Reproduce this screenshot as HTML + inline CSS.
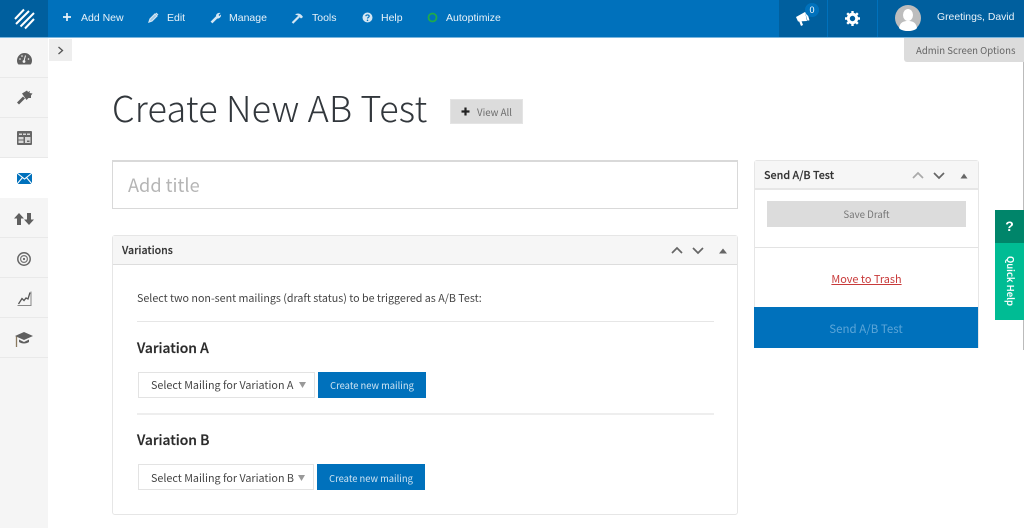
<!DOCTYPE html>
<html lang="en"><head><meta charset="utf-8"><title>Create New AB Test</title>
<style>
html,body{margin:0;padding:0;width:1024px;height:528px;overflow:hidden;background:#fff}
body{position:relative;font-family:"Noto Sans CJK JP","Liberation Sans",sans-serif;color:#3a3a3a}
.a{position:absolute;white-space:nowrap}
.b{position:absolute;box-sizing:border-box}
.nav{position:absolute;top:9px;font:10.5px/18px "Liberation Sans",sans-serif;color:#e8f2f9;white-space:nowrap}
svg{position:absolute;overflow:visible}
.side{position:absolute;left:0;width:48px;height:40px;border-bottom:1px solid #e9e9e9;box-sizing:border-box}
</style></head><body>
<div class="b" style="left:0;top:0;width:1024px;height:37px;background:#0071bc"></div>
<div class="b" style="left:0;top:37px;width:1024px;height:1px;background:#7ab6de"></div>
<div class="b" style="left:0;top:0;width:48px;height:37px;background:#005f9e"></div>
<div class="b" style="left:779px;top:0;width:245px;height:37px;background:#005f9e"></div>
<div class="b" style="left:827px;top:0;width:1px;height:37px;background:#0071bc"></div>
<div class="b" style="left:877px;top:0;width:1px;height:37px;background:#0071bc"></div>
<svg style="left:14px;top:8px" width="22" height="22" viewBox="0 0 22 22"><g stroke="#fff" stroke-width="2"><path d="M1 11 10 1.500M2 16 15 3M6.500 18.500 20 5M11 20.500 20 11"/></g></svg>

<svg style="left:62px;top:12px" width="10" height="10"><path d="M5 1v8M1 5h8" stroke="#e8f2f9" stroke-width="1.700"/></svg>
<div class="nav" style="left:81px">Add New</div>
<svg style="left:148px;top:12px" width="11" height="11"><path d="M1 10 2 7 7 2 9 4 4 9ZM8 1 10 3" fill="#9cc6e4" stroke="#d4e6f3" stroke-width="1.200"/></svg>
<div class="nav" style="left:167px">Edit</div>
<svg style="left:210px;top:12px" width="12" height="12"><path d="M1.500 10.500 7 5" stroke="#d4e6f3" stroke-width="2.600"/><path d="M6 4C6 2 8 .5 10.500 1L8.500 3 9.500 4 11 2.500C11.500 5 9 7 7 6.500Z" fill="#d4e6f3"/></svg>
<div class="nav" style="left:229px">Manage</div>
<svg style="left:291px;top:12px" width="13" height="13"><path d="M1.500 11 8 4.500" stroke="#d4e6f3" stroke-width="2.200"/><path d="M4 2.500C7 .5 10 1.500 12 5L10 6.500 7 3.500Z" fill="#d4e6f3"/></svg>
<div class="nav" style="left:312px">Tools</div>
<svg style="left:362px;top:12px" width="11" height="11"><circle cx="5.500" cy="5.500" r="5" fill="#d4e6f3"/><path d="M3.800 4.200C4 2.500 7.200 2.500 7.200 4.300 7.200 5.400 5.500 5.400 5.500 6.500" fill="none" stroke="#0071bc" stroke-width="1.200"/><circle cx="5.500" cy="8.300" r=".8" fill="#0071bc"/></svg>
<div class="nav" style="left:381px">Help</div>
<svg style="left:427px;top:12px" width="11" height="11"><circle cx="5.500" cy="5.500" r="4" fill="none" stroke="#1faa4c" stroke-width="1.800"/></svg>
<div class="nav" style="left:446px">Autoptimize</div>

<svg style="left:795px;top:9px" width="18" height="17"><path d="M1 8 10 3 12 12 3 12.500Z" fill="#fff"/><path d="M4 12 6 17 8 16 6.500 12Z" fill="#fff"/><path d="M11 3 13.500 11.500" stroke="#fff" stroke-width="2"/></svg>
<div class="b" style="left:805px;top:3px;width:14px;height:14px;border-radius:7px;background:#0071bc;color:#fff;font:9px/14px 'Liberation Sans',sans-serif;text-align:center">0</div>
<svg style="left:845px;top:11px" width="15" height="15" viewBox="0 0 15 15"><circle cx="7.500" cy="7.500" r="4.200" fill="none" stroke="#fff" stroke-width="3"/><g stroke="#fff" stroke-width="2.400"><path d="M7.500 0v2.500M7.500 12.500V15M0 7.500h2.500M12.500 7.500H15M2.200 2.200 4 4M11 11l1.800 1.800M2.200 12.800 4 11M11 4l1.800-1.800"/></g></svg>
<svg style="left:895px;top:5px" width="26" height="26" viewBox="0 0 26 26"><circle cx="13" cy="13" r="13" fill="#bdbdbd"/><ellipse cx="13" cy="10" rx="5" ry="6" fill="#fff"/><path d="M4 23C5 17 9 16 13 16S21 17 22 23C19 27 7 27 4 23Z" fill="#fff"/></svg>
<div class="nav" style="left:937px;color:#e8f2f9;font-size:10.4px">Greetings, David</div>

<div class="b" style="left:904px;top:38px;width:120px;height:24px;background:#dcdcdc;border-radius:0 0 0 3px"></div>
<div class="a" style="left:916px;top:42px;font-size:9.6px;line-height:16px;color:#666">Admin Screen Options</div>

<div class="b" style="left:0;top:38px;width:48px;height:490px;background:#f5f5f5"></div>
<div class="side" style="top:38px"></div><div class="side" style="top:78px"></div><div class="side" style="top:118px"></div>
<div class="side" style="top:158px;background:#fff;border:0"></div>
<div class="side" style="top:198px"></div><div class="side" style="top:238px"></div><div class="side" style="top:278px"></div><div class="side" style="top:318px"></div>
<div class="b" style="left:49px;top:39px;width:23px;height:22px;background:#eee"></div>
<svg style="left:57px;top:46px" width="7" height="9"><path d="M1.500 1 5.500 4.500 1.500 8" fill="none" stroke="#555" stroke-width="1.300"/></svg>

<svg style="left:17px;top:52px" width="15" height="13" viewBox="0 0 15 13"><path d="M0 8.500a7.500 7.500 0 0 1 15 0c0 2-.6 3.300-1.500 4H1.500C.6 11.800 0 10.500 0 8.500Z" fill="#5f5f5f"/><path d="M8.500 3.500 7 9" stroke="#f5f5f5" stroke-width="1"/><circle cx="7" cy="9.500" r="1.400" fill="#f5f5f5"/><circle cx="3" cy="7" r=".8" fill="#f5f5f5"/><circle cx="5" cy="4" r=".8" fill="#f5f5f5"/><circle cx="11.500" cy="7" r=".8" fill="#f5f5f5"/></svg>
<svg style="left:16px;top:90px" width="17" height="16" viewBox="0 0 17 16"><path d="M6 3.500 11 .5 12 2 14 1 13.500 3 16.500 3.500 15 5.500 15 8 12.500 8 10.500 10Z" fill="#5f5f5f"/><path d="M8 7.500 2 13.500" stroke="#5f5f5f" stroke-width="2.800"/></svg>
<svg style="left:17px;top:131px" width="15" height="14" viewBox="0 0 15 14"><rect width="15" height="14" rx="1" fill="#666"/><path d="M2 2.500h3V4H2zM6 2.500h3V4H6zM10 2.500h3V4h-3zM1.500 6h5v2.500h-5zM1.500 9.500h5V12h-5zM8 6h5.500v6H8z" fill="#d8d8d8"/><path d="M10 9.500h2.500V11H10z" fill="#666"/></svg>
<svg style="left:17px;top:173px" width="15" height="11" viewBox="0 0 15 11"><rect width="15" height="11" fill="#0071bc"/><path d="M0 0 7.500 6 15 0M0 11 5.500 4.500M15 11 9.500 4.500" fill="none" stroke="#fff" stroke-width="1.100"/></svg>
<svg style="left:14px;top:213px" width="20" height="12" viewBox="0 0 20 12"><path d="M5 0 10 5.500H7V12H3V5.500H0ZM15 12 10 6.500H13V0H17V6.500H20Z" fill="#5f5f5f"/></svg>
<svg style="left:17px;top:252px" width="14" height="14" viewBox="0 0 14 14"><circle cx="7" cy="7" r="6.200" fill="none" stroke="#666" stroke-width="1.500"/><circle cx="7" cy="7" r="3.400" fill="none" stroke="#777" stroke-width="1.200"/><circle cx="7" cy="7" r="1.100" fill="#666"/></svg>
<svg style="left:17px;top:291px" width="15" height="15" viewBox="0 0 15 15"><path d="M.5 14.500h13.500V.5" fill="none" stroke="#888" stroke-width="1"/><path d="M1.500 13 5 7.500 7 9.500 9 7 11 8 13 1.500" fill="none" stroke="#555" stroke-width="1.300"/></svg>
<svg style="left:15px;top:332px" width="18" height="15" viewBox="0 0 18 15"><path d="M0 4 9 0 18 4 9 8Z" fill="#5f5f5f"/><path d="M4 7.500V10C7 12 11 12 14 10V7.500L9 10Z" fill="#5f5f5f"/><path d="M1.500 4.500V15" stroke="#8a7a60" stroke-width="1.300"/></svg>

<div class="a" style="left:112px;top:82px;font-size:36px;line-height:50px;font-weight:300;color:#32373c;letter-spacing:.2px">Create New AB Test</div>
<div class="b" style="left:450px;top:99px;width:73px;height:25px;background:#dcdcdc;border:1px solid #e4e4e4"></div>
<svg style="left:461px;top:107px" width="9" height="9"><path d="M4.500 .5v8M.5 4.500h8" stroke="#222" stroke-width="2.200"/></svg>
<div class="a" style="left:477px;top:104px;font-size:9.7px;line-height:16px;color:#6c6c6c">View All</div>

<div class="b" style="left:112px;top:160px;width:626px;height:49px;border:1px solid #d9d9d9;border-width:2px 1px 1px 1px"></div>
<div class="a" style="left:128px;top:171px;font-size:18.2px;line-height:28px;color:#b5b5b5">Add title</div>

<div class="b" style="left:112px;top:235px;width:626px;height:280px;border:1px solid #e6e6e6;border-radius:3px"></div>
<div class="b" style="left:113px;top:236px;width:624px;height:29px;background:#f6f6f6;border-bottom:1px solid #ddd"></div>
<div class="a" style="left:122px;top:242px;font-size:10.6px;line-height:17px;color:#333;font-weight:500;-webkit-text-stroke:.15px #333">Variations</div>
<svg style="left:671px;top:245px" width="60" height="10"><path d="M1 8 6 3 11 8M22 3 27 8 32 3" fill="none" stroke="#666" stroke-width="1.700"/><path d="M48 8.500 52 3.500 56 8.500Z" fill="#666"/></svg>
<div class="a" style="left:137px;top:290px;font-size:10.7px;line-height:17px;color:#444">Select two non-sent mailings (draft status) to be triggered as A/B Test:</div>
<div class="b" style="left:137px;top:321px;width:577px;height:1px;background:#e6e6e6"></div>
<div class="a" style="left:137px;top:337px;font-size:13.9px;line-height:22px;font-weight:500;color:#2b2b2b;-webkit-text-stroke:.25px #2b2b2b">Variation A</div>
<div class="b" style="left:138px;top:372px;width:177px;height:26px;border:1px solid #e3e3e3"></div>
<div class="a" style="left:151px;top:377px;font-size:10.75px;line-height:17px;color:#444">Select Mailing for Variation A</div>
<svg style="left:299px;top:382px" width="8" height="7"><path d="M0 0h7L3.500 6Z" fill="#999"/></svg>
<div class="b" style="left:318px;top:372px;width:108px;height:26px;background:#0071bc"></div>
<div class="a" style="left:318px;top:377px;width:108px;text-align:center;font-size:9.4px;line-height:17px;color:#cfe4f3">Create new mailing</div>

<div class="b" style="left:137px;top:413px;width:577px;height:2px;background:#eee"></div>
<div class="a" style="left:137px;top:429px;font-size:13.9px;line-height:22px;font-weight:500;color:#2b2b2b;-webkit-text-stroke:.25px #2b2b2b">Variation B</div>
<div class="b" style="left:138px;top:464px;width:176px;height:26px;border:1px solid #e3e3e3"></div>
<div class="a" style="left:151px;top:470px;font-size:10.75px;line-height:17px;color:#444">Select Mailing for Variation B</div>
<svg style="left:298px;top:475px" width="8" height="7"><path d="M0 0h7L3.500 6Z" fill="#999"/></svg>
<div class="b" style="left:317px;top:464px;width:108px;height:26px;background:#0071bc"></div>
<div class="a" style="left:317px;top:470px;width:108px;text-align:center;font-size:9.4px;line-height:17px;color:#cfe4f3">Create new mailing</div>

<div class="b" style="left:754px;top:160px;width:225px;height:188px;border:1px solid #e6e6e6;border-radius:3px 3px 0 0"></div>
<div class="b" style="left:755px;top:161px;width:223px;height:29px;background:#f6f6f6;border-bottom:2px solid #e6e6e6"></div>
<div class="a" style="left:764px;top:167px;font-size:10.75px;line-height:17px;color:#333;font-weight:500;-webkit-text-stroke:.15px #333">Send A/B Test</div>
<svg style="left:912px;top:170px" width="60" height="10"><path d="M1 8 6 3 11 8" fill="none" stroke="#aaa" stroke-width="1.700"/><path d="M22 3 27 8 32 3" fill="none" stroke="#666" stroke-width="1.700"/><path d="M48.500 8.500 52 3.500 55.500 8.500Z" fill="#666"/></svg>
<div class="b" style="left:767px;top:201px;width:199px;height:26px;background:#dcdcdc"></div>
<div class="a" style="left:767px;top:206px;width:199px;text-align:center;font-size:9.7px;line-height:17px;color:#777">Save Draft</div>
<div class="b" style="left:755px;top:247px;width:223px;height:1px;background:#e3e3e3"></div>
<div class="a" style="left:755px;top:271px;width:223px;text-align:center;font-size:10.9px;line-height:17px;color:#c83a3a;text-decoration:underline">Move to Trash</div>
<div class="b" style="left:754px;top:307px;width:224px;height:41px;background:#0071bc"></div>
<div class="a" style="left:754px;top:320px;width:224px;text-align:center;font-size:11.5px;line-height:18px;color:#5ba5d8">Send A/B Test</div>

<div class="b" style="left:1023px;top:62px;width:1px;height:288px;background:#bbb"></div>
<div class="b" style="left:995px;top:210px;width:29px;height:33px;background:#00856a"></div>
<div class="a" style="left:995px;top:216px;width:29px;text-align:center;font:bold 14px/20px 'Liberation Sans',sans-serif;color:#fff">?</div>
<div class="b" style="left:995px;top:243px;width:29px;height:77px;background:#00bc94"></div>
<div class="a" style="left:1004px;top:256px;font-size:9.6px;line-height:14px;font-weight:500;color:#fff;writing-mode:vertical-rl;-webkit-text-stroke:.1px #fff">Quick Help</div>
</body></html>
